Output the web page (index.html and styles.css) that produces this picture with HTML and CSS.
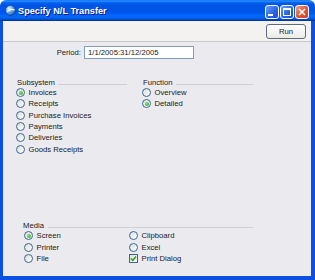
FILE: index.html
```html
<!DOCTYPE html>
<html lang="en">
<head>
    <meta charset="UTF-8">
    <title>Specify N/L Transfer</title>
    <link rel="stylesheet" href="styles.css">
</head>
<body>

    <div class="window">
        <!-- Title bar -->
        <div class="titlebar">
            <svg class="app-icon" width="11" height="11" viewBox="0 0 11 11">
                <defs>
                    <radialGradient id="globe" cx="35%" cy="30%" r="70%">
                        <stop offset="0" stop-color="#e8f4ff"/>
                        <stop offset="0.5" stop-color="#6fb0ec"/>
                        <stop offset="1" stop-color="#1d5fb8"/>
                    </radialGradient>
                </defs>
                <circle cx="5.5" cy="5.5" r="5" fill="url(#globe)" stroke="#0c3f8c" stroke-width="0.6"/>
                <path d="M2 7 C4 4.5 7 4 9.5 5" fill="none" stroke="#ffffff" stroke-width="1.1"/>
            </svg>
            <span class="title">Specify N/L Transfer</span>
            <div class="controls">
                <span class="ctl min"><i></i></span>
                <span class="ctl max"><i></i></span>
                <span class="ctl close">
                    <svg width="8" height="8" viewBox="0 0 8 8"><path d="M1 1 L7 7 M7 1 L1 7" stroke="#fff" stroke-width="1.6"/></svg>
                </span>
            </div>
        </div>

        <div class="frame">
            <div class="toolbar">
                <button class="run">Run</button>
            </div>

            <div class="content">
                <div class="period">
                    <label for="period">Period:</label>
                    <input type="text" id="period" value="1/1/2005:31/12/2005">
                </div>

                <div class="groups">
                    <div class="group">
                        <div class="group-head"><span>Subsystem</span><i class="rule"></i></div>
                        <div class="opt"><span class="radio on"></span>Invoices</div>
                        <div class="opt"><span class="radio"></span>Receipts</div>
                        <div class="opt"><span class="radio"></span>Purchase Invoices</div>
                        <div class="opt"><span class="radio"></span>Payments</div>
                        <div class="opt"><span class="radio"></span>Deliveries</div>
                        <div class="opt"><span class="radio"></span>Goods Receipts</div>
                    </div>
                    <div class="group">
                        <div class="group-head"><span>Function</span><i class="rule"></i></div>
                        <div class="opt"><span class="radio"></span>Overview</div>
                        <div class="opt"><span class="radio on"></span>Detailed</div>
                    </div>
                </div>

                <div class="media">
                    <div class="group-head"><span>Media</span><i class="rule"></i></div>
                    <div class="media-grid">
                        <div class="opt"><span class="radio on"></span>Screen</div>
                        <div class="opt"><span class="radio"></span>Printer</div>
                        <div class="opt"><span class="radio"></span>File</div>
                        <div class="opt"><span class="radio"></span>Clipboard</div>
                        <div class="opt"><span class="radio"></span>Excel</div>
                        <div class="opt">
                            <span class="check">
                                <svg width="7" height="7" viewBox="0 0 7 7"><path d="M1 3.5 L2.8 5.4 L6 1.5" fill="none" stroke="#21a121" stroke-width="1.6"/></svg>
                            </span>Print Dialog
                        </div>
                    </div>
                </div>
            </div>
        </div>
    </div>

</body>
</html>
```

FILE: styles.css
```css
body {
    margin: 0;
    background: #ffffff;
    font-family: "Liberation Sans", Arial, sans-serif;
    font-size: 7.7px;
    color: #1a1a1a;
}
.window {
    width: 315px;
    height: 280px;
    display: flex;
    flex-direction: column;
}

/* title bar */
.titlebar {
    height: 21px;
    flex: none;
    display: flex;
    align-items: center;
    padding: 0 6px 0 5px;
    border-radius: 6px 6px 0 0;
    background: linear-gradient(to bottom, #0058ee 0%, #3593ff 4%, #288eff 6%, #127dff 8%, #036ffc 10%, #0262ee 14%, #0057e5 20%, #0054e3 24%, #0055eb 56%, #005bf5 66%, #026afe 76%, #0062ef 86%, #0052d6 92%, #0040ab 94%, #003092 100%);
}
.app-icon {
    flex: none;
}
.title {
    margin-left: 2px;
    color: #fff;
    font-weight: bold;
    font-size: 9.2px;
    text-shadow: 1px 1px 0 #0f1089;
    flex: 1;
}
.controls {
    display: flex;
    gap: 1px;
    margin-top: 2px;
}
.ctl {
    width: 14px;
    height: 14px;
    box-sizing: border-box;
    border: 1px solid #fff;
    border-radius: 3px;
    background: linear-gradient(135deg, #6c9ef8 0%, #2663e0 60%, #1a4fd0 100%);
    display: flex;
    align-items: center;
    justify-content: center;
}
.ctl.min i {
    width: 5px;
    height: 2px;
    background: #fff;
    margin-top: 6px;
    margin-right: 3px;
}
.ctl.max i {
    width: 6px;
    height: 5px;
    border: 1px solid #fff;
    border-top-width: 2px;
}
.ctl.close {
    background: linear-gradient(135deg, #f0a08a 0%, #e25a38 50%, #c8401e 100%);
}

/* frame */
.frame {
    flex: 1;
    display: flex;
    flex-direction: column;
    border-left: 3px solid #0b50e0;
    border-right: 4px solid #0b50e0;
    border-bottom: 4px solid #0b50e0;
    background: #ebebef;
}
.toolbar {
    height: 21px;
    flex: none;
    display: flex;
    justify-content: flex-end;
    align-items: flex-start;
    padding-right: 5px;
    background: #f3f2f0;
    border-bottom: 1px solid #c8c7cc;
    box-sizing: border-box;
}
.run {
    margin-top: 3px;
    width: 40px;
    height: 15px;
    padding: 0;
    font-family: inherit;
    font-size: 7.7px;
    border: 1px solid #5c6a80;
    border-radius: 3px;
    background: linear-gradient(to bottom, #ffffff, #eceae4);
    color: #1a1a1a;
}

.content {
    flex: 1;
    display: flex;
    flex-direction: column;
}
.period {
    margin-top: 4px;
    height: 13px;
    display: flex;
    align-items: center;
}
.period label {
    width: 78px;
    text-align: right;
}
.period input {
    margin-left: 3px;
    width: 110px;
    height: 13px;
    box-sizing: border-box;
    border: 1px solid #7f9db9;
    padding: 0 0 0 3px;
    font-family: inherit;
    font-size: 7.7px;
    color: #1a1a1a;
    background: #fff;
}

.groups {
    margin-top: 18px;
    padding-left: 13px;
    display: grid;
    grid-template-columns: 126px 126px;
}
.group-head {
    height: 10px;
    display: flex;
    align-items: center;
    padding-right: 15px;
}
.group-head span {
    margin-left: 1px;
}
.rule {
    flex: 1;
    height: 1px;
    margin: 4px 0 0 3px;
    background: #cfd0d6;
}
.opt {
    height: 11.33px;
    display: flex;
    align-items: center;
}
.radio, .check {
    flex: none;
    width: 9px;
    height: 9px;
    box-sizing: border-box;
    border: 1px solid #3a6796;
    margin-right: 3.5px;
    background: linear-gradient(135deg, #dcdcd6, #ffffff);
    display: flex;
    align-items: center;
    justify-content: center;
}
.radio {
    border-radius: 50%;
}
.radio.on::after {
    content: "";
    width: 4px;
    height: 4px;
    border-radius: 50%;
    background: radial-gradient(circle at 35% 35%, #7be278, #22a01f);
}

.media {
    margin: auto 0 12px 20px;
    width: 230px;
}
.media .group-head {
    padding-right: 0;
}
.media .group-head span {
    margin-left: 0;
}
.media .rule {
    margin-left: 4px;
}
.media-grid {
    padding-left: 1px;
    display: grid;
    grid-template-columns: 105px 105px;
    grid-template-rows: repeat(3, 11.33px);
    grid-auto-flow: column;
}
```
